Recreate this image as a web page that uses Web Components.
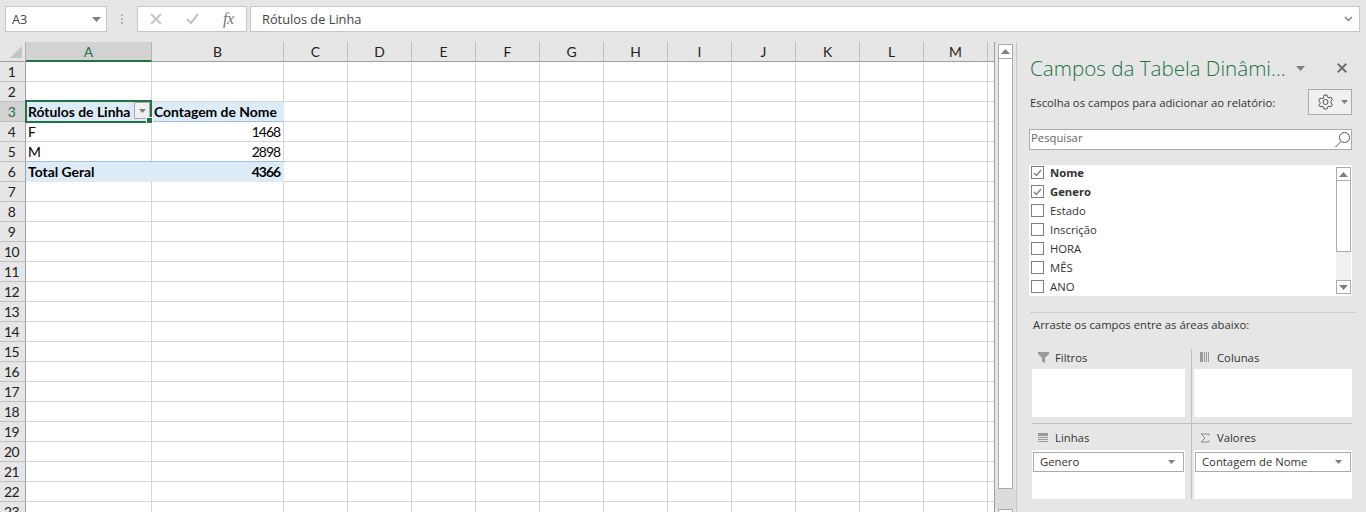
<!DOCTYPE html>
<html lang="pt">
<head>
<meta charset="utf-8">
<title>Excel</title>
<style>
  html, body { margin: 0; height: 512px; overflow: hidden; background: #e6e6e6; }
  .work { display: flex; height: 470px; }
</style>
</head>
<body>
<xl-formula-bar cell="A3" value="Rótulos de Linha"></xl-formula-bar>
<div class="work">
  <xl-sheet></xl-sheet>
  <xl-scrollbar></xl-scrollbar>
  <xl-pivot-panel>
    <xl-field-row slot="fields" label="Nome" checked></xl-field-row>
    <xl-field-row slot="fields" label="Genero" checked></xl-field-row>
    <xl-field-row slot="fields" label="Estado"></xl-field-row>
    <xl-field-row slot="fields" label="Inscrição"></xl-field-row>
    <xl-field-row slot="fields" label="HORA"></xl-field-row>
    <xl-field-row slot="fields" label="MÊS"></xl-field-row>
    <xl-field-row slot="fields" label="ANO"></xl-field-row>
    <xl-area slot="areas" label="Filtros" icon="filter" top left></xl-area>
    <xl-area slot="areas" label="Colunas" icon="columns" top></xl-area>
    <xl-area slot="areas" label="Linhas" icon="rows" left><xl-pill>Genero</xl-pill></xl-area>
    <xl-area slot="areas" label="Valores" icon="sigma"><xl-pill>Contagem de Nome</xl-pill></xl-area>
  </xl-pivot-panel>
</div>

<script>
const ARROW = '<svg width="9" height="5" viewBox="0 0 9 5"><path d="M0 0h9L4.500 5z" fill="#7f7f7f"/></svg>';
const SMALL_ARROW = '<svg width="7" height="4" viewBox="0 0 7 4"><path d="M0 0h7L3.500 4z" fill="#7f7f7f"/></svg>';

class XlFormulaBar extends HTMLElement {
    constructor() {
        super();
        this.attachShadow({ mode: 'open' });
        this.shadowRoot.innerHTML = `
            <style>
                :host { display: flex; align-items: flex-start; height: 42px; box-sizing: border-box; padding: 6px 5px 0 5px; font: 12.800px "Open Sans", sans-serif; color: #444; }
                .box { height: 26px; box-sizing: border-box; background: #fff; border: 1px solid #c6c6c6; display: flex; align-items: center; }
                .name { width: 102px; justify-content: space-between; padding: 0 5px 0 6px; }
                .dots { width: 30px; display: flex; flex-direction: column; align-items: center; justify-content: center; gap: 2px; height: 26px; }
                .dots i { width: 2px; height: 2px; background: #b4b4b4; }
                .btns { width: 110px; padding-left: 12px; gap: 24px; }
                .btns svg { flex: none; }
                .fx { font: italic 16px "Liberation Serif", serif; color: #777; letter-spacing: -0.5px; }
                .input { flex: 1; margin-left: 3px; justify-content: space-between; padding: 0 6px 0 11px; margin-right: 1px; }
            </style>
            <div class="box name"><span>${this.getAttribute('cell')}</span>${ARROW}</div>
            <div class="dots"><i></i><i></i><i></i></div>
            <div class="box btns">
                <svg width="12" height="12" viewBox="0 0 12 12"><path d="M1 1l10 10M11 1L1 11" stroke="#c6c6c6" stroke-width="2" fill="none"/></svg>
                <svg width="13" height="12" viewBox="0 0 13 12"><path d="M1 6l4 4 7-9" stroke="#c6c6c6" stroke-width="2.200" fill="none"/></svg>
                <span class="fx">fx</span>
            </div>
            <div class="box input"><span>${this.getAttribute('value')}</span>
                <svg width="9" height="6" viewBox="0 0 9 6"><path d="M1 1l3.500 3.500L8 1" stroke="#7f7f7f" stroke-width="1.500" fill="none"/></svg>
            </div>
        `;
    }
}

class XlSheet extends HTMLElement {
    constructor() {
        super();
        this.attachShadow({ mode: 'open' });
        const cols = ['A','B','C','D','E','F','G','H','I','J','K','L','M'];
        const data = {
            '3A': ['Rótulos de Linha', 'pv head'], '3B': ['Contagem de Nome', 'pv head'],
            '4A': ['F', ''], '4B': ['1468', 'num'],
            '5A': ['M', ''], '5B': ['2898', 'num'],
            '6A': ['Total Geral', 'pv total'], '6B': ['4366', 'pv total num']
        };
        let cells = '<div class="corner"><svg width="12" height="12" viewBox="0 0 12 12"><path d="M12 0v12H0z" fill="#c4c4c4"/></svg></div>';
        for (const c of cols) cells += `<div class="ch ${c === 'A' ? 'sel' : ''}">${c}</div>`;
        cells += '<div class="chend"></div>';
        for (let r = 1; r <= 23; r++) {
            cells += `<div class="rh ${r === 3 ? 'sel' : ''}">${r}</div>`;
            for (const c of cols) {
                const d = data[r + c] || ['', ''];
                cells += `<div class="cell ${d[1]}">${d[0]}</div>`;
            }
            cells += '<div class="cell end"></div>';
        }
        this.shadowRoot.innerHTML = `
            <style>
                :host { display: block; width: 995px; flex: none; height: 470px; overflow: hidden; box-sizing: border-box; border-right: 1px solid #9f9f9f; position: relative; font: 13.900px Lato, sans-serif; color: #000; }
                .grid { display: grid; grid-template-columns: 26px 126px 132px repeat(11, 64px) 6px; grid-auto-rows: 20px; background: #fff; }
                .corner { background: #e6e6e6; border-right: 1px solid #b1b1b1; border-bottom: 1px solid #9f9f9f; box-sizing: border-box; padding: 4px 0 0 10px; }
                .corner svg { display: block; }
                .ch { background: #e6e6e6; box-sizing: border-box; border-right: 1px solid #c0c0c0; border-bottom: 1px solid #9f9f9f; text-align: center; line-height: 19px; color: #222; }
                .ch.sel { background: #d2d2d2; border-bottom: 2px solid #217346; color: #217346; border-right-color: #b1b1b1; }
                .chend { background: #e6e6e6; border-bottom: 1px solid #9f9f9f; }
                .rh { background: #e6e6e6; box-sizing: border-box; border-right: 1px solid #9f9f9f; border-bottom: 1px solid #c0c0c0; text-align: center; line-height: 19px; color: #222; padding-right: 2px; letter-spacing: -0.5px; }
                .rh.sel { background: #d2d2d2; color: #217346; }
                .cell { box-sizing: border-box; border-right: 1px solid #d4d4d4; border-bottom: 1px solid #d4d4d4; padding: 0 2px; line-height: 19px; white-space: nowrap; overflow: hidden; }
                .cell.end { border-right: 0; }
                .num { text-align: right; letter-spacing: -1px; padding-right: 3px; }
                .pv { background: #ddebf7; font-weight: 700; border-right-color: #ddebf7; border-bottom-color: #ddebf7; }
                .head { border-bottom-color: #9bc2e6; }
                .sel-box { position: absolute; left: 25px; top: 58px; width: 127px; height: 23px; box-sizing: border-box; border: 2px solid #217346; pointer-events: none; }
                .handle { position: absolute; right: -3px; bottom: -3px; width: 5px; height: 5px; background: #217346; border: 1px solid #fff; }
                .drop { position: absolute; left: 134px; top: 60px; width: 16px; height: 17px; box-sizing: border-box; background: #f0f0f0; border: 1px solid #ababab; display: flex; align-items: center; justify-content: center; }
                .sep { position: absolute; left: 26px; top: 119px; width: 258px; height: 1px; background: #9bc2e6; }
            </style>
            <div class="grid">${cells}</div>
            <div class="sep"></div>
            <div class="drop">${SMALL_ARROW}</div>
            <div class="sel-box"><div class="handle"></div></div>
        `;
    }
}

class XlScrollbar extends HTMLElement {
    constructor() {
        super();
        this.attachShadow({ mode: 'open' });
        this.shadowRoot.innerHTML = `
            <style>
                :host { display: flex; flex-direction: column; flex: none; width: 21px; height: 470px; box-sizing: border-box; padding: 2px 3px 0 3px; overflow: hidden; }
                .btn { flex: none; width: 15px; height: 15px; box-sizing: border-box; background: #fff; border: 1px solid #ababab; display: flex; align-items: center; justify-content: center; }
                .thumb { flex: none; height: 430px; box-sizing: border-box; background: #fff; border: 1px solid #ababab; border-top: 0; }
                .track { flex: none; height: 20px; margin: 0 -3px; background: #dcdcdc; }
            </style>
            <div class="btn"><svg width="9" height="5" viewBox="0 0 9 5"><path d="M0 5h9L4.500 0z" fill="#7f7f7f"/></svg></div>
            <div class="thumb"></div>
            <div class="track"></div>
            <div class="btn"></div>
        `;
    }
}

class XlFieldRow extends HTMLElement {
    constructor() {
        super();
        this.attachShadow({ mode: 'open' });
        const on = this.hasAttribute('checked');
        this.shadowRoot.innerHTML = `
            <style>
                :host { display: flex; align-items: center; height: 19px; gap: 6px; padding-left: 2px; font-weight: ${on ? 700 : 400}; }
                .box { width: 13px; height: 13px; box-sizing: border-box; border: 1px solid #7f7f7f; background: #fff; display: flex; align-items: center; justify-content: center; }
                span { line-height: 16px; }
            </style>
            <div class="box">${on ? '<svg width="9" height="8" viewBox="0 0 9 8"><path d="M1 4l2.500 2.500L8 1" stroke="#7f7f7f" stroke-width="1.300" fill="none"/></svg>' : ''}</div>
            <span>${this.getAttribute('label')}</span>
        `;
    }
}

class XlPill extends HTMLElement {
    constructor() {
        super();
        this.attachShadow({ mode: 'open' });
        this.shadowRoot.innerHTML = `
            <style>
                :host { display: flex; align-items: center; justify-content: space-between; box-sizing: border-box; height: 20px; margin: 2px 1px 0 1px; padding: 0 8px 0 6px; background: #fff; border: 1px solid #ababab; }
                span { padding-bottom: 2px; }
            </style>
            <span><slot></slot></span>${SMALL_ARROW}
        `;
    }
}

const AREA_ICONS = {
    filter: '<svg width="11" height="11" viewBox="0 0 11 11"><path d="M0 0h11v2L7 6v5L4 9.500V6L0 2z" fill="#9a9a9a"/></svg>',
    columns: '<svg width="10" height="10" viewBox="0 0 10 10"><path d="M0 0h3v10H0zM4 0h1v10H4zM6 0h1v10H6zM8 0h1v10H8z" fill="#9a9a9a"/></svg>',
    rows: '<svg width="10" height="9" viewBox="0 0 10 9"><path d="M0 0h10v3H0zM0 4h10v1H0zM0 6h10v1H0zM0 8h10v1H0z" fill="#9a9a9a"/></svg>',
    sigma: '<svg width="10" height="10" viewBox="0 0 10 10"><path d="M9 2.500V1H1l4 4-4 4h8V7.500" stroke="#8a8a8a" fill="none"/></svg>'
};

class XlArea extends HTMLElement {
    constructor() {
        super();
        this.attachShadow({ mode: 'open' });
        this.shadowRoot.innerHTML = `
            <style>
                :host { display: flex; flex-direction: column; box-sizing: border-box; height: 75px; }
                :host([top]) { border-bottom: 1px solid #c0c0c0; padding-bottom: 6px; }
                :host([left]) { border-right: 1px solid #c0c0c0; padding-right: 6px; }
                :host(:not([left])) { padding-left: 2px; }
                .head { display: flex; align-items: center; gap: 5px; padding-left: 4px; height: 20px; flex: none; box-sizing: border-box; padding-bottom: 4px; }
                :host(:not([top])) .head { height: 26px; padding-bottom: 0; padding-top: 1px; }
                .icon { width: 14px; display: flex; justify-content: center; }
                .body { flex: 1; background: #fff; display: flex; flex-direction: column; }
            </style>
            <div class="head"><span class="icon">${AREA_ICONS[this.getAttribute('icon')]}</span><span>${this.getAttribute('label')}</span></div>
            <div class="body"><slot></slot></div>
        `;
    }
}

class XlPivotPanel extends HTMLElement {
    constructor() {
        super();
        this.attachShadow({ mode: 'open' });
        this.shadowRoot.innerHTML = `
            <style>
                :host { display: block; flex: 1; box-sizing: border-box; height: 470px; border-left: 1px solid #c6c6c6; padding: 12px 14px 0 12px; font: 11.300px "Open Sans", sans-serif; color: #333; }
                .title { display: flex; align-items: center; height: 28px; font-size: 20.600px; font-weight: 300; color: #217346; white-space: nowrap; padding-left: 1px; }
                .title .t { width: 266px; }
                .title .x { margin-left: 32px; display: flex; }
                .choose { display: flex; align-items: center; justify-content: space-between; margin-top: 7px; height: 26px; padding-left: 1px; }
                .gear { width: 44px; height: 26px; box-sizing: border-box; background: #f0f0f0; border: 1px solid #ababab; display: flex; align-items: center; gap: 7px; padding-left: 8px; }
                .search { margin-top: 14px; height: 21px; box-sizing: border-box; background: #fff; border: 1px solid #ababab; display: flex; align-items: center; justify-content: space-between; padding: 0 0 0 1px; color: #666; }
                .search span { padding-bottom: 4px; }
                .list { margin-top: 15px; height: 131px; background: #fff; display: flex; overflow: hidden; }
                .fields { flex: 1; margin-top: -2px; }
                .bar { flex: none; width: 15px; margin: 2px 1px 0 0; display: flex; flex-direction: column; height: 127px; background: #f0f0f0; }
                .bar .b { flex: none; height: 14px; box-sizing: border-box; background: #fff; border: 1px solid #ababab; display: flex; align-items: center; justify-content: center; }
                .bar .th { flex: none; height: 71px; box-sizing: border-box; background: #fff; border: 1px solid #ababab; border-top-width: 0; }
                .bar .sp { flex: 1; }
                .dotted { margin: 16px -4px 0 2px; border-top: 1px dotted #b4b4b4; }
                .drag { margin: 5px 0 0 4px; height: 14px; line-height: 14px; }
                .areas { margin: 17px 0 0 3px; display: grid; grid-template-columns: 160px 160px; }
            </style>
            <div class="title"><span class="t">Campos da Tabela Dinâmi...</span>
                <svg width="9" height="5" viewBox="0 0 9 5"><path d="M0 0h9L4.500 5z" fill="#7f7f7f"/></svg>
                <span class="x"><svg width="10" height="10" viewBox="0 0 10 10"><path d="M.7.7l8.600 8.600M9.300.7L.7 9.300" stroke="#6f6f6f" stroke-width="2" fill="none"/></svg></span>
            </div>
            <div class="choose"><span>Escolha os campos para adicionar ao relatório:</span>
                <div class="gear">
                    <svg width="17" height="17" viewBox="0 0 17 17"><path d="M7 1.500h3l.5 2 1.500.8 2-.6 1.400 2.600-1.500 1.400v1.600l1.500 1.400-1.400 2.600-2-.6-1.500.8-.5 2H7l-.5-2-1.500-.8-2 .6L1.600 11.700l1.500-1.400V8.700L1.600 7.300 3 4.700l2 .6 1.500-.8z" stroke="#555" fill="none" transform="translate(0 -.5)"/><circle cx="8.500" cy="8" r="2.500" stroke="#555" fill="none"/></svg>
                    ${SMALL_ARROW}
                </div>
            </div>
            <div class="search"><span>Pesquisar</span>
                <svg width="17" height="17" viewBox="0 0 17 17"><circle cx="10.500" cy="6.500" r="5" stroke="#555" fill="none"/><path d="M7 10.500L1.500 16" stroke="#555" fill="none"/></svg>
            </div>
            <div class="list">
                <div class="fields"><slot name="fields"></slot></div>
                <div class="bar">
                    <div class="b"><svg width="9" height="5" viewBox="0 0 9 5"><path d="M0 5h9L4.500 0z" fill="#7f7f7f"/></svg></div>
                    <div class="th"></div><div class="sp"></div>
                    <div class="b">${ARROW}</div>
                </div>
            </div>
            <div class="dotted"></div>
            <div class="drag">Arraste os campos entre as áreas abaixo:</div>
            <div class="areas"><slot name="areas"></slot></div>
        `;
    }
}

customElements.define('xl-formula-bar', XlFormulaBar);
customElements.define('xl-sheet', XlSheet);
customElements.define('xl-scrollbar', XlScrollbar);
customElements.define('xl-field-row', XlFieldRow);
customElements.define('xl-pill', XlPill);
customElements.define('xl-area', XlArea);
customElements.define('xl-pivot-panel', XlPivotPanel);
</script>
</body>
</html>
